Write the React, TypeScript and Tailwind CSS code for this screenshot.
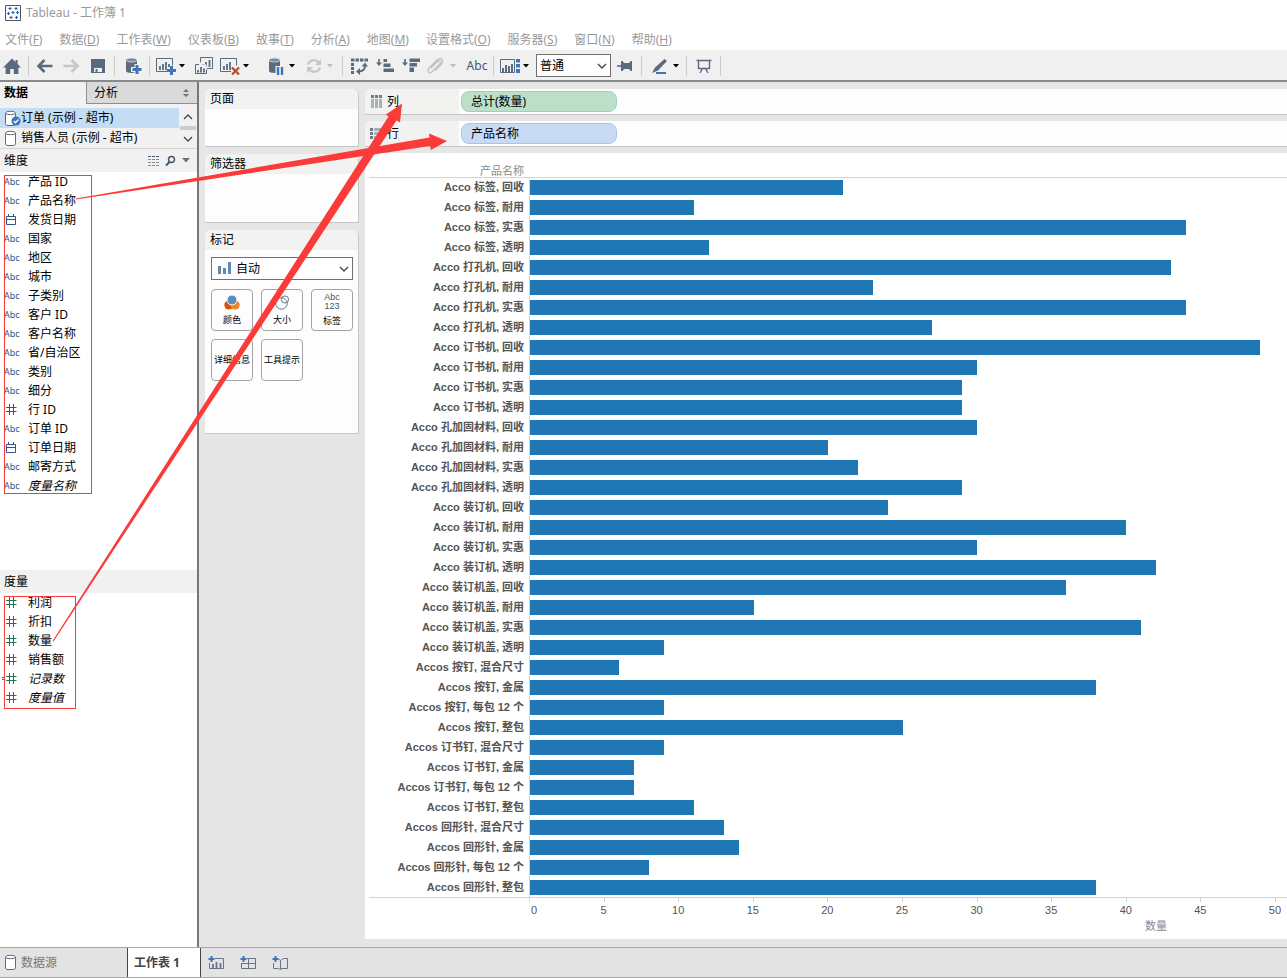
import React from "react";

type FieldKind = "abc" | "date" | "num";
type Field = { kind: FieldKind; name: string; italic?: boolean; derived?: boolean };

const menus: [string, string][] = [
  ["文件", "F"],
  ["数据", "D"],
  ["工作表", "W"],
  ["仪表板", "B"],
  ["故事", "T"],
  ["分析", "A"],
  ["地图", "M"],
  ["设置格式", "O"],
  ["服务器", "S"],
  ["窗口", "N"],
  ["帮助", "H"],
];

const dimensions: Field[] = [
  { kind: "abc", name: "产品 ID" },
  { kind: "abc", name: "产品名称" },
  { kind: "date", name: "发货日期" },
  { kind: "abc", name: "国家" },
  { kind: "abc", name: "地区" },
  { kind: "abc", name: "城市" },
  { kind: "abc", name: "子类别" },
  { kind: "abc", name: "客户 ID" },
  { kind: "abc", name: "客户名称" },
  { kind: "abc", name: "省/自治区" },
  { kind: "abc", name: "类别" },
  { kind: "abc", name: "细分" },
  { kind: "num", name: "行 ID" },
  { kind: "abc", name: "订单 ID" },
  { kind: "date", name: "订单日期" },
  { kind: "abc", name: "邮寄方式" },
  { kind: "abc", name: "度量名称", italic: true },
];

const measures: Field[] = [
  { kind: "num", name: "利润" },
  { kind: "num", name: "折扣" },
  { kind: "num", name: "数量" },
  { kind: "num", name: "销售额" },
  { kind: "num", name: "记录数", italic: true, derived: true },
  { kind: "num", name: "度量值", italic: true },
];

const rows: [string, number][] = [
  ["Acco 标签, 回收", 21],
  ["Acco 标签, 耐用", 11],
  ["Acco 标签, 实惠", 44],
  ["Acco 标签, 透明", 12],
  ["Acco 打孔机, 回收", 43],
  ["Acco 打孔机, 耐用", 23],
  ["Acco 打孔机, 实惠", 44],
  ["Acco 打孔机, 透明", 27],
  ["Acco 订书机, 回收", 49],
  ["Acco 订书机, 耐用", 30],
  ["Acco 订书机, 实惠", 29],
  ["Acco 订书机, 透明", 29],
  ["Acco 孔加固材料, 回收", 30],
  ["Acco 孔加固材料, 耐用", 20],
  ["Acco 孔加固材料, 实惠", 22],
  ["Acco 孔加固材料, 透明", 29],
  ["Acco 装订机, 回收", 24],
  ["Acco 装订机, 耐用", 40],
  ["Acco 装订机, 实惠", 30],
  ["Acco 装订机, 透明", 42],
  ["Acco 装订机盖, 回收", 36],
  ["Acco 装订机盖, 耐用", 15],
  ["Acco 装订机盖, 实惠", 41],
  ["Acco 装订机盖, 透明", 9],
  ["Accos 按钉, 混合尺寸", 6],
  ["Accos 按钉, 金属", 38],
  ["Accos 按钉, 每包 12 个", 9],
  ["Accos 按钉, 整包", 25],
  ["Accos 订书钉, 混合尺寸", 9],
  ["Accos 订书钉, 金属", 7],
  ["Accos 订书钉, 每包 12 个", 7],
  ["Accos 订书钉, 整包", 11],
  ["Accos 回形针, 混合尺寸", 13],
  ["Accos 回形针, 金属", 14],
  ["Accos 回形针, 每包 12 个", 8],
  ["Accos 回形针, 整包", 38],
];

const ticks = [0, 5, 10, 15, 20, 25, 30, 35, 40, 45, 50];
// Part of the axis that is visible in the view
const DOMAIN = 50.8;

/* ---------- icons ---------- */

function Icon({ children }: { children: React.ReactNode }) {
  return (
    <svg width="20" height="20" viewBox="0 0 20 20" fill="none" aria-hidden="true">
      {children}
    </svg>
  );
}

const slate = "#5b6b7f";
const blue = "#3f74b8";

const HomeIcon = () => (
  <Icon>
    <path d="M10 2.500 1 11.600h2.600V18h4.600v-5h3.600v5h4.600v-6.400H19L15.600 8.100V4h-2v2.100z" fill={slate} />
  </Icon>
);
const BackIcon = ({ flip, color = slate }: { flip?: boolean; color?: string }) => (
  <Icon>
    <path
      d={flip ? "M2.500 10H16M10.500 4l6 6-6 6" : "M17.500 10H4M9.500 4l-6 6 6 6"}
      stroke={color}
      strokeWidth="2.600"
    />
  </Icon>
);
const SaveIcon = () => (
  <Icon>
    <path d="M3 3h14v14H3z" fill={slate} />
    <path d="M6 12h8v4H6z" fill="#f0f0f0" />
    <path d="M7.500 13h2v3h-2z" fill={slate} />
  </Icon>
);
const Cylinder = () => (
  <>
    <path d="M3 4v11c0 1.200 2.500 2 5.500 2s5.500-.8 5.500-2V4z" fill={slate} />
    <ellipse cx="8.500" cy="4" rx="5.500" ry="2" fill="#7d8998" stroke="#e4e7ea" strokeWidth=".8" />
  </>
);
const DbPlusIcon = () => (
  <Icon>
    <Cylinder />
    <path d="M11.500 8h5v3H20v5h-3.500v3h-5v-3H8v-5h3.500z" fill="#f0f0f0" />
    <path d="M14 9v9M9.500 13.500h9" stroke={blue} strokeWidth="3" />
  </Icon>
);
const DbPauseIcon = () => (
  <Icon>
    <Cylinder />
    <path d="M9.500 10h10v9h-10z" fill="#f0f0f0" />
    <path d="M12 11v8M16 11v8" stroke={blue} strokeWidth="2.400" />
  </Icon>
);
const NewSheetIcon = () => (
  <Icon>
    <path d="M11 15.500H.5V2.500h16v7" stroke={slate} />
    <path d="M4 10v4M7 8v6M10 6v8M13 8v3" stroke={slate} strokeWidth="1.800" />
    <path d="M15.500 10v9M11 14.500h9" stroke={blue} strokeWidth="3" />
  </Icon>
);
const DuplicateIcon = () => (
  <Icon>
    <path d="M6.500 6.500v-5h12v11H13" stroke={slate} />
    <path d="M9 8v3M12 6v5M15.500 4v7" stroke={slate} strokeWidth="1.800" />
    <path d="M1.500 8.500h11v9h-11z" fill="#f0f0f0" />
    <path d="M5 8.500H1.500v9h11v-4" stroke={slate} />
    <path d="M4 14v2.500M7 11v5.500M10 12.500v4" stroke={slate} strokeWidth="1.800" />
  </Icon>
);
const ClearIcon = () => (
  <Icon>
    <path d="M11 15.500H.5V2.500h16v7" stroke={slate} />
    <path d="M4 10v4M7 8v6M10 6v8" stroke={slate} strokeWidth="1.800" />
    <path d="m12 11.500 7 7m0-7-7 7" stroke="#b9482c" strokeWidth="2.200" />
  </Icon>
);
const RefreshIcon = () => (
  <Icon>
    <path d="M4 8.500a6 6 0 0 1 10.500-2M16 11.500a6 6 0 0 1-10.500 2" stroke="#c6c6c6" strokeWidth="2.200" />
    <path d="M17 3v6h-6zM3 17v-6h6z" fill="#c6c6c6" />
  </Icon>
);
const SwapIcon = () => (
  <Icon>
    <path d="M2 4h17" stroke={slate} strokeWidth="3" strokeDasharray="3.500 1" />
    <path d="M3.500 7v12" stroke={slate} strokeWidth="3" strokeDasharray="3 1" />
    <path d="M16 9c.5 4-2 6.500-6.500 6.500" stroke={slate} strokeWidth="1.800" />
    <path d="m12.500 10.500 3.500-4 3 4zM11 12l-4 3.500 4 3.500z" fill={slate} />
  </Icon>
);
const SortIcon = ({ desc }: { desc?: boolean }) => (
  <Icon>
    <path d="M4 3v5" stroke={slate} strokeWidth="1.600" />
    <path d="M1 6.500h6L4 10z" fill={slate} />
    {desc ? (
      <path d="M8.500 2.500H19V6H8.500zM8.500 7H16v3.500H8.500zM8.500 11.500H13V16H8.500z" fill={slate} />
    ) : (
      <path d="M8.500 3H12v3H8.500zM8.500 7.500h7v3.500h-7zM8.500 12.500H19V16H8.500z" fill={slate} />
    )}
  </Icon>
);
const ClipIcon = () => (
  <Icon>
    <path
      d="m6 12 6.500-6.500c1.800-1.800 4 .4 2.500 2.200L7.500 15.500c-2.800 2.800-6-.4-3.500-3.200L12 4c3.500-3.500 7.500.5 4.500 4L10 14.500"
      stroke="#c2c2c2"
      strokeWidth="1.400"
    />
  </Icon>
);
const ShowMeIcon = () => (
  <Icon>
    <path d="M.5 3.500h14v13H.5z" stroke={slate} />
    <path d="M3 12v4M6 9v7M9 10v6M12 8v8" stroke={slate} strokeWidth="2" />
    <path d="M16 3h4v3.500h-4zM16 8h4v3.500h-4zM16 13h4v4h-4z" fill={blue} />
  </Icon>
);
const PinIcon = () => (
  <Icon>
    <path d="M2 10h5" stroke={slate} strokeWidth="1.600" />
    <path d="M6 5h1.600l1.400 2h5l1.500-2H17v10h-1.500L14 13H9l-1.400 2H6z" fill={slate} />
  </Icon>
);
const PenIcon = () => (
  <Icon>
    <path d="M14.500 3 17 5 8 14.500l-6 2.500 3-5.500z" fill={slate} />
    <path d="M6 17h10" stroke={blue} strokeWidth="2" />
  </Icon>
);
const PresentIcon = () => (
  <Icon>
    <path d="M2.500 4.500h15M4.500 4.500v8h11v-8M8.500 12.500 6 17M11.500 12.500 14 17" stroke={slate} strokeWidth="1.400" />
  </Icon>
);

const Database = ({ checked }: { checked?: boolean }) => (
  <svg width="17" height="17" viewBox="0 0 17 17" fill="none" aria-hidden="true" className="shrink-0">
    <path
      d="M1.500 3v10.500c0 1.200 1 2 2.500 2h5c1.500 0 2.500-.8 2.500-2V3"
      fill="#fff"
      stroke="#5a6a80"
    />
    <ellipse cx="6.500" cy="3" rx="5" ry="1.700" fill="#fff" stroke="#5a6a80" />
    {checked && (
      <>
        <circle cx="12" cy="11" r="4.500" fill="#3f74b8" />
        <path d="m9.800 11 1.700 1.700 3-3.200" stroke="#fff" strokeWidth="1.300" />
      </>
    )}
  </svg>
);

const Chevron = ({ up }: { up?: boolean }) => (
  <svg width="10" height="6" viewBox="0 0 10 6" fill="none" aria-hidden="true">
    <path d={up ? "M1 5l4-4 4 4" : "M1 1l4 4 4-4"} stroke="#444" strokeWidth="1.300" />
  </svg>
);

/* ---------- toolbar ---------- */

function Tool({ label, className, children }: { label: string; className: string; children: React.ReactNode }) {
  return (
    <button type="button" aria-label={label} className={`flex h-6 w-5 shrink-0 items-center justify-center ${className}`}>
      {children}
    </button>
  );
}

function Caret({ className = "", light }: { className?: string; light?: boolean }) {
  return (
    <button type="button" aria-label="更多" className={`flex h-6 w-3 shrink-0 items-center justify-center ${className}`}>
      <svg width="6" height="4" viewBox="0 0 6 4" aria-hidden="true">
        <path d="M0 0h6L3 3.500z" fill={light ? "#bdbdbd" : "#000"} />
      </svg>
    </button>
  );
}

const Sep = ({ className }: { className: string }) => <span className={`h-5 w-px shrink-0 bg-[#cbcbcb] ${className}`} />;

function Toolbar() {
  return (
    <div role="toolbar" className="flex h-8 items-center border-b-2 border-[#8a8a8a] bg-[#f0f0f0] pt-px">
      <Tool label="主页" className="ml-0.5"><HomeIcon /></Tool>
      <Sep className="ml-1.5" />
      <Tool label="撤消" className="ml-1.5"><BackIcon /></Tool>
      <Tool label="重做" className="ml-1.5"><BackIcon flip color="#c6c6c6" /></Tool>
      <Tool label="保存" className="ml-[7px]"><SaveIcon /></Tool>
      <Sep className="ml-1.5" />
      <Tool label="新建数据源" className="ml-2"><DbPlusIcon /></Tool>
      <Sep className="ml-1.5" />
      <Tool label="新建工作表" className="ml-1.5"><NewSheetIcon /></Tool>
      <Caret />
      <Tool label="复制工作表" className="ml-1.5"><DuplicateIcon /></Tool>
      <Tool label="清除工作表" className="ml-1.5"><ClearIcon /></Tool>
      <Caret />
      <Tool label="暂停自动更新" className="ml-3.5"><DbPauseIcon /></Tool>
      <Caret />
      <Tool label="运行更新" className="ml-1.5"><RefreshIcon /></Tool>
      <Caret light />
      <Sep className="ml-1.5" />
      <Tool label="交换行和列" className="ml-1.5"><SwapIcon /></Tool>
      <Tool label="升序排序" className="ml-1.5"><SortIcon /></Tool>
      <Tool label="降序排序" className="ml-1.5"><SortIcon desc /></Tool>
      <Tool label="组成员" className="ml-1"><ClipIcon /></Tool>
      <Caret light className="ml-0.5" />
      <button type="button" className="ml-1.5 w-6 text-[12px] text-[#46566b]">Abc</button>
      <Sep className="ml-1" />
      <Tool label="智能显示" className="ml-1.5"><ShowMeIcon /></Tool>
      <Caret />
      <div className="relative ml-1 shrink-0">
        <select aria-label="适合" className="h-[23px] w-[75px] appearance-none border border-[#707070] bg-white px-[3px] text-[12px] text-black">
          <option>普通</option>
        </select>
        <span className="pointer-events-none absolute top-0 right-1 flex h-6 items-center"><Chevron /></span>
      </div>
      <Tool label="固定轴" className="ml-1"><PinIcon /></Tool>
      <Sep className="ml-1.5" />
      <Tool label="突出显示" className="ml-2"><PenIcon /></Tool>
      <Caret />
      <Sep className="ml-1" />
      <Tool label="演示模式" className="ml-[7px]"><PresentIcon /></Tool>
      <Sep className="ml-1.5" />
    </div>
  );
}

/* ---------- data pane ---------- */

function FieldIcon({ kind, color }: { kind: FieldKind; color: string }) {
  if (kind === "abc") return <span className="w-6 text-[9px] text-[#2f5591]">Abc</span>;
  return (
    <span className="flex w-6 items-center">
      <svg width="14" height="11" viewBox="0 0 14 11" fill="none" stroke={color} aria-hidden="true">
        {kind === "date" ? (
          <path d="M2.500 2.500h9v8h-9zM2.500 5.500h9M4.500 0v2.500M9.500 0v2.500" />
        ) : (
          <path d="M5.500 0v11M9.500 0v11M2 3.500h10.500M2 7.500h10.500" />
        )}
      </svg>
    </span>
  );
}

function FieldList({ fields, color, frame }: { fields: Field[]; color: string; frame: string }) {
  return (
    <div className="relative">
      <ul>
        {fields.map((f) => (
          <li key={f.name} className="relative flex h-[19px] items-center pl-1 text-[12px] text-black">
            {f.derived && <span className="absolute left-0.5 h-[3px] w-[3px] border-y border-[#1d7555]" />}
            <FieldIcon kind={f.kind} color={color} />
            <span className={f.italic ? "italic" : ""}>{f.name}</span>
          </li>
        ))}
      </ul>
      <div className={`pointer-events-none absolute top-[3px] left-1 border border-[#fb3a3a] ${frame}`} />
    </div>
  );
}

function DataPane() {
  return (
    <aside className="flex w-[199px] shrink-0 flex-col border-r-2 border-[#777] bg-white">
      <div role="tablist" className="flex h-[22px] shrink-0 bg-[#f1f1f1] text-[12px] text-black">
        <button type="button" role="tab" aria-selected="true" className="w-[86px] pl-1 text-left font-bold">
          数据
        </button>
        <button type="button" role="tab" aria-selected="false" className="flex flex-1 items-center justify-between border-b border-l border-[#8f8f8f] bg-[#dadada] pr-2 pl-[7px]">
          分析
          <svg width="6" height="8" viewBox="0 0 6 8" aria-hidden="true">
            <path d="M0 3l3-3 3 3zM0 5l3 3 3-3z" fill="#66758a" />
          </svg>
        </button>
      </div>
      <div className="flex shrink-0 bg-[#f1f1f1] pt-1">
        <ul className="flex-1 text-[12px] text-black">
          <li className="flex h-5 items-center bg-[#c4ddf5] pl-1"><Database checked />订单 (示例 - 超市)</li>
          <li className="flex h-5 items-center pl-1"><Database />销售人员 (示例 - 超市)</li>
        </ul>
        <div className="flex w-[18px] flex-col items-center justify-between bg-[#f1f1f1] py-1.5">
          <Chevron up />
          <span className="h-1 w-4 bg-[#cdcdcd]" />
          <Chevron />
        </div>
      </div>
      <div className="flex h-6 shrink-0 items-center border-t border-[#d4d4d4] bg-[#f1f1f1] pr-[7px] pl-1 text-[12px] text-black">
        <h2 className="flex-1">维度</h2>
        <svg width="12" height="10" viewBox="0 0 12 10" stroke="#888" aria-hidden="true">
          <path d="M0 .5h12" stroke="#44546a" strokeDasharray="3 1" />
          <path d="M0 3.500h12M0 6.500h12M0 9.500h12" strokeDasharray="3 1" />
        </svg>
        <svg width="12" height="12" viewBox="0 0 12 12" fill="none" stroke="#44546a" aria-hidden="true" className="ml-1">
          <circle cx="7.500" cy="4.500" r="3" strokeWidth="1.400" />
          <path d="M5.500 7 2 10.500" strokeWidth="2" />
        </svg>
        <svg width="8" height="5" viewBox="0 0 8 5" aria-hidden="true" className="ml-1.5">
          <path d="M0 0h8L4 4.500z" fill="#66758a" />
        </svg>
      </div>
      <FieldList fields={dimensions} color="#2f5591" frame="bottom-px w-[88px]" />
      <h2 className="mt-[75px] flex h-[23px] shrink-0 items-center bg-[#f1f1f1] pl-1 text-[12px] text-black">度量</h2>
      <FieldList fields={measures} color="#1d7555" frame="-bottom-0.5 w-[72px]" />
    </aside>
  );
}

/* ---------- cards ---------- */

function Card({ title, className, children }: { title: string; className: string; children?: React.ReactNode }) {
  return (
    <section className={`overflow-hidden rounded-t-md border-r border-b border-[#c6c6c6] bg-[#fdfdfd] ${className}`}>
      <h2 className="flex h-5 items-center bg-[#f2f2f0] pl-[5px] text-[12px] text-black">{title}</h2>
      {children}
    </section>
  );
}

function MarkButton({ label, children }: { label: string; children?: React.ReactNode }) {
  return (
    <button type="button" className="flex h-[42px] w-full flex-col items-center justify-center gap-1 rounded border border-[#a3a3a3] bg-[#fdfdfd] text-[9px] leading-[12px] whitespace-nowrap text-black">
      {children}
      <span>{label}</span>
    </button>
  );
}

function Cards() {
  return (
    <div className="flex w-[160px] shrink-0 flex-col gap-[7px] pt-[7px] pl-1.5">
      <Card title="页面" className="h-[58px]" />
      <Card title="筛选器" className="h-[69px]" />
      <Card title="标记" className="h-[204px]">
        <div className="pt-[7px] pr-[5px] pl-1.5">
          <div className="relative">
            <select aria-label="标记类型" className="h-[23px] w-full appearance-none border border-[#707070] bg-white pl-6 text-[12px] text-black">
              <option>自动</option>
            </select>
            <svg width="14" height="12" viewBox="0 0 14 12" className="pointer-events-none absolute top-[5px] left-1.5" fill="#5d8cae" aria-hidden="true">
              <path d="M1 4h3v8H1zM6 6h3v6H6zM11 0h3v12h-3z" />
            </svg>
            <span className="pointer-events-none absolute top-0 right-1 flex h-6 items-center"><Chevron /></span>
          </div>
          <div className="mt-[9px] grid grid-cols-3 gap-2">
            <MarkButton label="颜色">
              <svg width="16" height="15" viewBox="0 0 16 15" aria-hidden="true">
                <circle cx="4.800" cy="10" r="4.500" fill="#cf5412" />
                <circle cx="11.200" cy="10" r="4.500" fill="#f58220" />
                <circle cx="8" cy="5" r="5" fill="#5b8db8" stroke="#fdfdfd" />
              </svg>
            </MarkButton>
            <MarkButton label="大小">
              <svg width="16" height="15" viewBox="0 0 16 15" fill="none" stroke="#66758a" aria-hidden="true">
                <circle cx="7.500" cy="8.500" r="5.700" />
                <circle cx="11" cy="4.500" r="3.600" />
              </svg>
            </MarkButton>
            <MarkButton label="标签">
              <span className="flex flex-col font-['Liberation_Sans',sans-serif] text-[9px] leading-[9px] text-[#46566b]">
                <span>Abc</span>
                <span>123</span>
              </span>
            </MarkButton>
            <MarkButton label="详细信息" />
            <MarkButton label="工具提示" />
          </div>
        </div>
      </Card>
    </div>
  );
}

/* ---------- shelves and chart ---------- */

function Shelf({ label, pill, tone, vertical }: { label: string; pill: string; tone: string; vertical?: boolean }) {
  return (
    <div className="flex h-[26px] items-center overflow-hidden rounded-tl-md border-b border-[#c6c6c6] bg-[#fdfdfd]">
      <div className="flex h-full w-[94px] items-center gap-1 bg-[#f2f2f0] pl-[5px] text-[12px] text-black">
        <svg width="13" height="13" viewBox="0 0 13 13" aria-hidden="true">
          {vertical ? (
            <>
              <path d="M1 0h3v3H1zM5 0h3v3H5zM9 0h3v3H9z" fill="#6f7b8a" />
              <path d="M1 4h3v9H1zM5 4h3v9H5zM9 4h3v9H9z" fill="#a9b0b8" />
            </>
          ) : (
            <>
              <path d="M0 1h3v3H0zM0 5h3v3H0zM0 9h3v3H0z" fill="#6f7b8a" />
              <path d="M4 1h9v3H4zM4 5h9v3H4zM4 9h9v3H4z" fill="#a9b0b8" />
            </>
          )}
        </svg>
        {label}
      </div>
      <button type="button" className={`ml-0.5 h-[21px] w-[156px] rounded-lg border pl-[9px] text-left text-[12px] text-black ${tone}`}>
        {pill}
      </button>
    </div>
  );
}

const chartFont = "font-['Liberation_Sans','Noto_Sans_CJK_SC',sans-serif]";

function Chart() {
  return (
    <section className={`rounded-tl-md bg-white pt-[11px] pb-1.5 pl-1 ${chartFont}`}>
      <div className="flex h-[14px] items-center border-b border-[#d4d4d4]">
        <div className="w-[155px] text-right text-[11px] text-[#8a8a8a]">产品名称</div>
      </div>
      <div>
        {rows.map(([name, value]) => (
          <div key={name} className="flex h-5">
            <div className="w-[161px] shrink-0 border-r border-[#d4d4d4] pr-[5px] text-right text-[11px] leading-[19px] font-bold whitespace-nowrap text-[#555]">
              {name}
            </div>
            <div className="flex-1 pt-0.5">
              <div className="h-[15px] bg-[#1f77b4]" style={{ width: `${(value / DOMAIN) * 100}%` }} />
            </div>
          </div>
        ))}
      </div>
      <div className="-mt-px border-t border-[#d4d4d4] pl-[160px]">
        <div className="flex overflow-hidden">
          {ticks.map((t) => (
            <div key={t} className="group shrink-0" style={{ width: `${(5 / DOMAIN) * 100}%` }}>
              <div className="h-1 w-px bg-[#d4d4d4]" />
              <span className="inline-block -translate-x-1/2 text-[11px] leading-[17px] text-[#555] group-first:translate-x-0.5">{t}</span>
            </div>
          ))}
        </div>
        <div className="pr-[120px] text-right text-[11px] leading-[14px] text-[#8a8a8a]">数量</div>
      </div>
    </section>
  );
}

/* ---------- bottom tabs ---------- */

function SheetTabs() {
  return (
    <footer className="flex h-[31px] shrink-0 border-t border-b border-[#a8a8a8] bg-[#e3e3e3] text-[12px]">
      <button type="button" className="flex w-[127px] items-center pl-1 text-[#777]"><Database />数据源</button>
      <button type="button" className="w-[74px] border-x border-[#444] bg-white pl-1.5 text-left font-bold text-[#444]">工作表 1</button>
      <div className="flex items-center gap-4 pl-[7px]">
        <button type="button" aria-label="新建工作表">
          <svg width="16" height="16" viewBox="0 0 16 16" fill="none" aria-hidden="true">
            <path d="M7 3.500h8.500v10h-14V8" stroke="#66758a" />
            <path d="M5 9v4M8.500 7v6M12.500 8v5" stroke="#66758a" strokeWidth="1.800" />
            <path d="M3.500 1v6M.5 4h6" stroke={blue} strokeWidth="2" />
          </svg>
        </button>
        <button type="button" aria-label="新建仪表板">
          <svg width="16" height="16" viewBox="0 0 16 16" fill="none" aria-hidden="true">
            <path d="M7 3.500h8.500v10h-14V8M1.500 8.500h14M8.500 3.500v10" stroke="#66758a" />
            <path d="M3.500 1v6M.5 4h6" stroke={blue} strokeWidth="2" />
          </svg>
        </button>
        <button type="button" aria-label="新建故事">
          <svg width="16" height="16" viewBox="0 0 16 16" fill="none" aria-hidden="true">
            <path d="M1.500 8v5.500h5l1.500 1 2-1h5.500v-10h-4l-3 2v9M8.500 5.500 6.500 4" stroke="#66758a" />
            <path d="M3.500 1v6M.5 4h6" stroke={blue} strokeWidth="2" />
          </svg>
        </button>
      </div>
    </footer>
  );
}

export default function App() {
  return (
    <div className="relative flex min-h-screen flex-col bg-white pb-px font-['Noto_Sans','Noto_Sans_CJK_SC',sans-serif] text-[12px] leading-4">
      <header className="flex h-[25px] shrink-0 items-center gap-[5px] pl-[5px] text-[#999]">
        <svg width="16" height="16" viewBox="0 0 16 16" fill="none" aria-hidden="true">
          <path d="M.5.5h15v15H.5z" fill="#f7f9fb" stroke="#555" />
          <path
            d="M5 2v3M3.500 3.500h3M11 2v3M9.500 3.500h3M8 6v3M6.500 7.500h3M3.500 7v3M2 8.500h3M12.500 6v3M11 7.500h3M6 11v3M4.500 12.500h3M11.500 11v3M10 12.500h3"
            stroke="#2b5ca5"
          />
        </svg>
        <h1>Tableau - 工作簿 1</h1>
      </header>
      <nav className="flex h-[25px] shrink-0 items-center gap-[17px] pt-1 pl-[5px] text-[#999]">
        {menus.map(([name, key]) => (
          <button key={key} type="button" className="whitespace-nowrap">
            {name}(<u>{key}</u>)
          </button>
        ))}
      </nav>
      <Toolbar />
      <main className="flex flex-1 bg-[#e6e6e6]">
        <DataPane />
        <Cards />
        <div className="flex min-w-0 flex-1 flex-col gap-1.5 pt-[7px] pb-[7px] pl-1.5">
          <Shelf label="列" pill="总计(数量)" tone="border-[#a5cdb5] bg-[#bcdfca]" vertical />
          <Shelf label="行" pill="产品名称" tone="border-[#aac3ea] bg-[#c9daf5]" />
          <Chart />
        </div>
      </main>
      <SheetTabs />
      <svg width="460" height="660" viewBox="0 0 460 660" className="pointer-events-none absolute top-0 left-0" fill="#fb3a3a" aria-hidden="true">
        <path d="M76 198.500 429.500 137.500 429 133.500 447 141 431 150 430 146 76 199.500z" />
        <path d="M52.500 641 388.500 116.500 386 114.500 402 103.500 400 122.500 396.500 120.500 53.500 641.500z" />
      </svg>
    </div>
  );
}
